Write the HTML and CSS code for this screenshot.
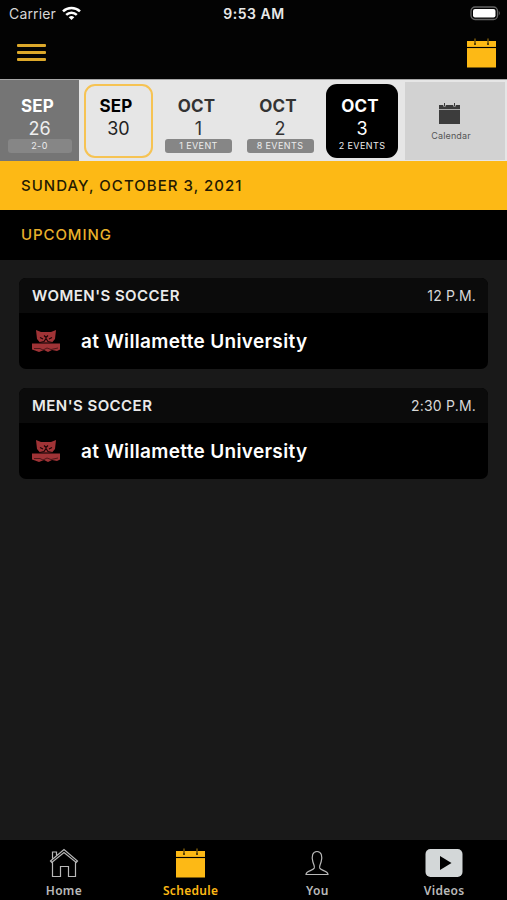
FILE: index.html
```html
<!DOCTYPE html>
<html lang="en">
<head>
<meta charset="utf-8">
<title>Schedule</title>
<link rel="stylesheet" href="styles.css">
</head>
<body>
<svg class="defs" width="0" height="0" aria-hidden="true">
  <symbol id="cal" viewBox="0 0 29 30">
    <path d="M0 3h29v6H0zM0 10h29v19.500H0z" fill="currentColor"/>
    <path d="M0 9.500h29" stroke="#000" stroke-opacity=".65" stroke-width="1.200"/>
    <path d="M8 3v4M21 3v4" stroke="#000" stroke-opacity=".65" stroke-width="2"/>
    <path d="M8 .5v4.500M21 .5v4.500" stroke="currentColor" stroke-opacity=".7" stroke-width="1"/>
  </symbol>
  <symbol id="minical" viewBox="0 0 21 21">
    <path d="M0 2h21v4H0zM0 7h21v14H0z" fill="currentColor"/>
    <path d="M0 6.500h21" stroke="#aaa" stroke-width="1"/>
    <path d="M5.500 0v3.500M15.500 0v3.500" stroke="#d2d2d2" stroke-width="2.400"/>
    <path d="M5.500 0v3M15.500 0v3" stroke="currentColor" stroke-width="1"/>
  </symbol>
  <symbol id="bearcat" viewBox="0 0 28 24">
    <g fill="#a03336">
      <path d="M4 1l5 2h10l5-2-1 9-3 3.500H8L5 10z"/>
      <path d="M0 14.500h28v6l-3 1.500-5-1-4 2-4-2-5 2-4-1.500-3-1z"/>
    </g>
    <path d="M8 8.500l3 1.500M20 8.500L17 10M12 6.500l2 2 2-2M8 13.500l4-1 2-3 2 3 4 1" fill="none" stroke="#1c0506" stroke-width="1.200"/>
    <path d="M2 19.500h6l3 1.500 4-2 4 1.500 7-1.500" fill="none" stroke="#4e181a" stroke-width="1"/>
  </symbol>
</svg>
<div class="app">
  <header class="top">
    <div class="status">
      <div class="carrier"><span>Carrier</span>
        <svg width="19" height="14" viewBox="0 0 19 14" fill="none" stroke="#fff" stroke-width="2.500"><path d="M1 5.300a12.300 12.300 0 0 1 17 0M4.200 8.900a7.600 7.600 0 0 1 10.600 0"/><path d="M9.500 14L6.700 11.300a4.300 4.300 0 0 1 5.600 0z" fill="#fff" stroke="none"/></svg>
      </div>
      <div class="clock">9:53 AM</div>
      <svg class="battery" width="31" height="15" viewBox="0 0 31 15"><rect x="1" y="1" width="26.500" height="12.500" rx="4" fill="none" stroke="#646464" stroke-width="1.300"/><rect x="3" y="3" width="22.500" height="8.500" rx="2" fill="#fff"/><path d="M28.800 5q2 2.200 0 4.500z" fill="#646464"/></svg>
    </div>
    <div class="nav">
      <div class="menu"><i></i><i></i><i></i></div>
      <svg class="gold" width="29" height="30"><use href="#cal"/></svg>
    </div>
  </header>
  <div class="strip">
    <div class="day past"><b>SEP</b><span>26</span><em>2-0</em></div>
    <div class="day today"><b>SEP</b><span>30</span></div>
    <div class="day"><b>OCT</b><span>1</span><em>1 EVENT</em></div>
    <div class="day"><b>OCT</b><span>2</span><em>8 EVENTS</em></div>
    <div class="day selected"><b>OCT</b><span>3</span><em>2 EVENTS</em></div>
    <div class="calendar"><svg width="21" height="21"><use href="#minical"/></svg><span>Calendar</span></div>
  </div>
  <div class="date"><span>SUNDAY, OCTOBER 3, 2021</span></div>
  <div class="upcoming"><span>UPCOMING</span></div>
  <main>
    <section class="card">
      <div class="head"><b>WOMEN'S SOCCER</b><span>12 P.M.</span></div>
      <div class="body"><svg width="28" height="24"><use href="#bearcat"/></svg><span>at Willamette University</span></div>
    </section>
    <section class="card">
      <div class="head"><b>MEN'S SOCCER</b><span>2:30 P.M.</span></div>
      <div class="body"><svg width="28" height="24"><use href="#bearcat"/></svg><span>at Willamette University</span></div>
    </section>
  </main>
  <nav class="tabs">
    <div class="tab">
      <svg width="30" height="30" viewBox="0 0 30 30" fill="none" stroke="#b9b9b9" stroke-width="1.200"><path d="M1.500 13L15 1.500 28.500 13l-1.300 1.500L15 4.500 2.800 14.500zM3.500 14v14.500h8V18.500h8v10h7V14M3.500 10.500V4h4v3.200"/></svg>
      <span>Home</span>
    </div>
    <div class="tab active"><svg width="29" height="30"><use href="#cal"/></svg><span>Schedule</span></div>
    <div class="tab">
      <svg width="26" height="30" viewBox="0 0 26 30" fill="none" stroke="#b9b9b9" stroke-width="1.200"><path d="M2 26.500h22c0-4-7-3.500-8.300-6.500-.6-2 .8-3.500 1.500-6.500 1.300-5 .5-10-4.200-10s-5.500 5-4.200 10c.7 3 2.100 4.500 1.500 6.500C9 23 2 22.500 2 26.500z"/></svg>
      <span>You</span>
    </div>
    <div class="tab">
      <svg width="38" height="30" viewBox="0 0 38 30"><rect x=".5" y="1" width="37" height="28" rx="5" fill="#d3d7d8"/><path d="M15 8l11.500 7L15 22z" fill="#000"/></svg>
      <span>Videos</span>
    </div>
  </nav>
</div>
</body>
</html>
```

FILE: styles.css
```css
* { box-sizing: border-box; }
body { margin: 0; background: #191919; font-family: Inter, "Liberation Sans", sans-serif; }
svg { display: block; flex: none; }
.defs { position: absolute; }
.app { width: 507px; height: 900px; display: flex; flex-direction: column; overflow: hidden; white-space: nowrap; }
.top { height: 79px; background: #030303; color: #e8e8e8; flex: none; }
.status { height: 27px; display: grid; grid-template-columns: 1fr auto 1fr; align-items: center; padding: 0 6px 0 9px; }
.carrier { display: flex; align-items: center; gap: 6px; font-size: 14px; letter-spacing: .15px; color: #d6d6d6; }
.carrier svg { margin-top: -2px; }
.clock { font-size: 14px; font-weight: 600; letter-spacing: .5px; margin-right: 2px; }
.battery { justify-self: end; margin-top: -1px; }
.nav { display: flex; justify-content: space-between; padding: 11px 11px 0 17px; }
.menu { display: flex; flex-direction: column; gap: 4px; padding-top: 6px; }
.menu i { width: 29px; height: 3px; border-radius: 1px; background: #dca82a; }
.gold { color: #fdb915; }
.strip { height: 82px; flex: none; display: grid; grid-template-columns: 79px 79px 81px 82px 82px 100px; background: #e6e6e6; border-top: 1px solid #a6a6a6; }
.day { display: flex; flex-direction: column; align-items: center; color: #333; padding-top: 15px; }
.day b { font-size: 17px; line-height: 22px; font-weight: 700; letter-spacing: .2px; margin-right: 4px; }
.day span { font-size: 18px; line-height: 22px; margin-top: 1px; }
.day em { width: 67px; height: 14px; line-height: 14px; border-radius: 3px; background: #868686; color: #ececec; font-style: normal; font-size: 9px; letter-spacing: .4px; text-align: center; margin-top: -1px; }
.past { background: #757575; color: #fff; }
.past span { color: #eee; }
.past em { width: 64px; }
.today { height: 74px; margin: 4px 5px 0; padding-top: 9px; border: 2px solid #f6c353; border-radius: 11px; color: #000; }
.today b { margin-right: 5px; }
.today span { color: #222; }
.selected { height: 74px; margin: 4px 5px 0; padding-top: 11px; border-radius: 11px; background: #000; color: #fff; }
.selected em { background: none; }
.calendar { margin: 2px -2px 1px 2px; background: #d2d2d2; display: flex; flex-direction: column; align-items: center; padding: 21px 12px 0 0; color: #3c3c3c; }
.calendar span { font-size: 9px; line-height: 12px; letter-spacing: .15px; margin: 6px 0 0 4px; color: #555; }
.date { height: 49px; background: #fdb915; color: #241a02; padding: 0 21px 1px; display: flex; align-items: center; flex: none; font-size: 15px; font-weight: 500; letter-spacing: 1.03px; }
.upcoming { height: 50px; background: #000; color: #e9b02b; padding: 0 21px 1px; display: flex; align-items: center; flex: none; font-size: 15px; font-weight: 500; letter-spacing: .9px; }
main { flex: 1; padding: 18px 19px; display: flex; flex-direction: column; gap: 19px; }
.card { height: 91px; border-radius: 7px; background: #000; overflow: hidden; }
.head { height: 35px; background: #0b0b0b; display: flex; align-items: center; justify-content: space-between; padding: 0 12px 0 13px; color: #eaeaea; }
.head b { font-size: 15px; font-weight: 600; letter-spacing: .45px; }
.head span { font-size: 14px; letter-spacing: .2px; color: #d8d8d8; }
.body { height: 56px; display: flex; align-items: center; gap: 21px; padding-left: 13px; color: #fff; font-size: 19px; font-weight: 600; letter-spacing: .33px; }
.tabs { height: 60px; background: #000; display: grid; grid-template-columns: repeat(4, 1fr); flex: none; }
.tab { display: flex; flex-direction: column; align-items: center; padding: 8px 0 0 1px; color: #b9b9b9; }
.tab span { font-family: "Noto Sans", sans-serif; font-size: 12px; line-height: 16px; font-weight: 600; letter-spacing: .3px; margin-top: 5px; }
.active { color: #fdb915; }
```
